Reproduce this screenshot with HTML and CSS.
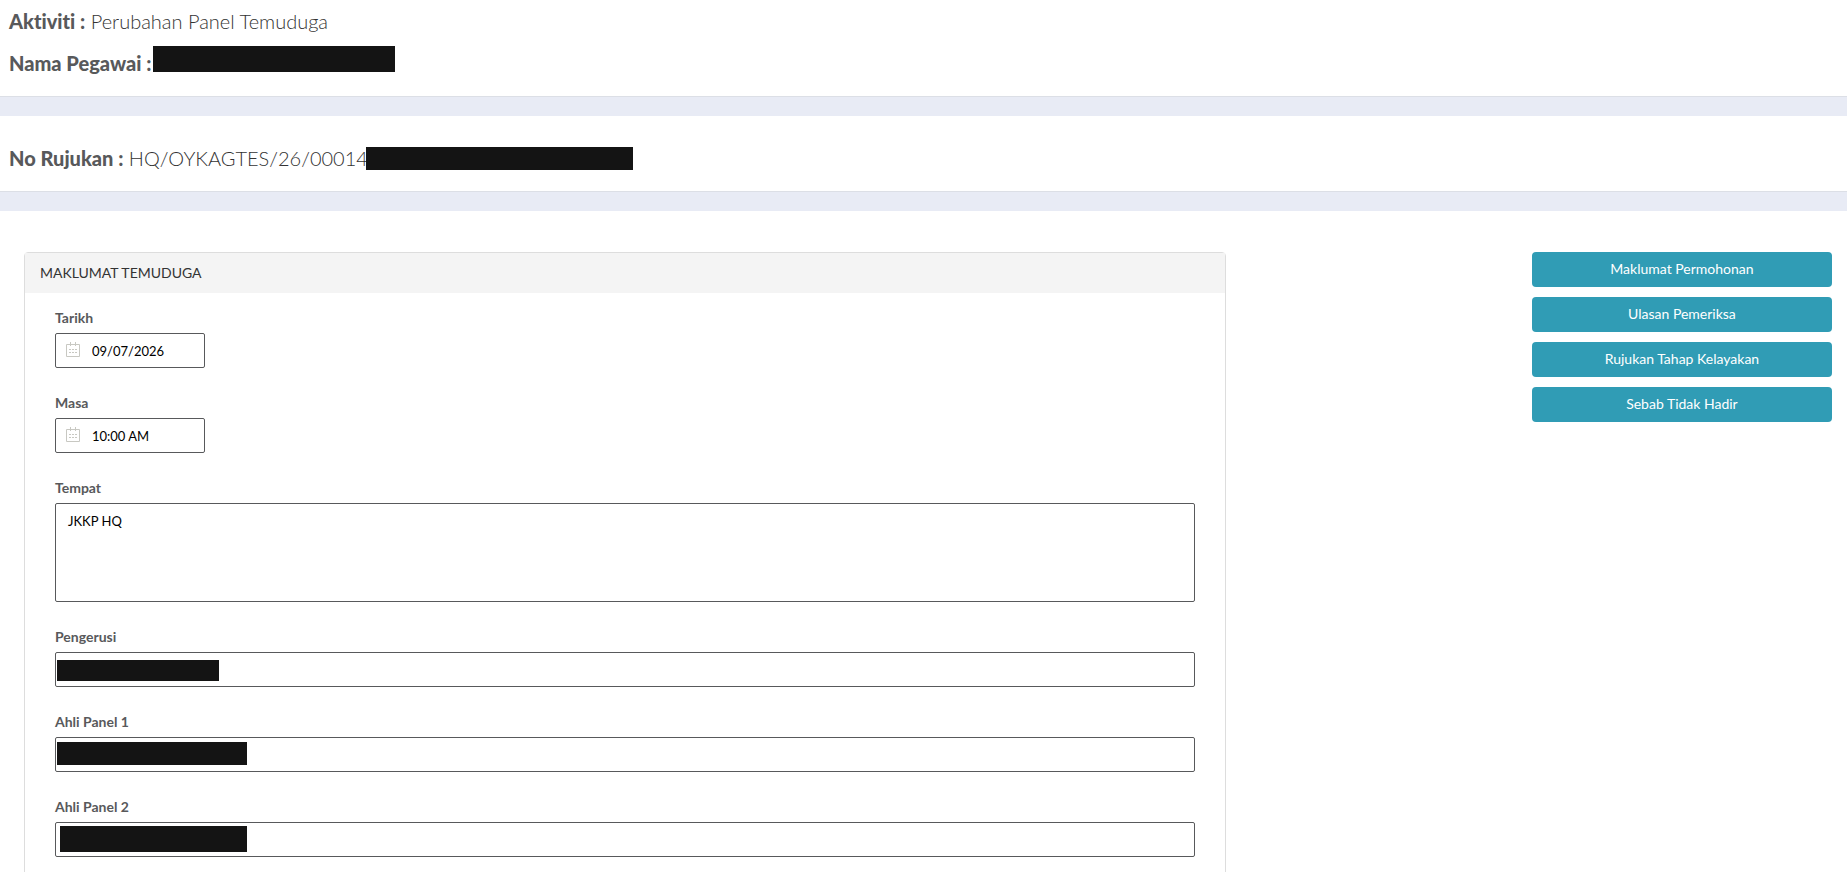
FILE: index.html
```html
<!DOCTYPE html>
<html lang="ms">
<head>
    <meta charset="UTF-8">
    <meta name="viewport" content="width=device-width, initial-scale=1.0">
    <title>Perubahan Panel Temuduga</title>
    <link rel="stylesheet" href="styles.css">
</head>
<body>
    <header class="activity">
        <p class="info-line"><strong>Aktiviti :</strong> Perubahan Panel Temuduga</p>
        <p class="info-line"><strong>Nama Pegawai :</strong><span class="redacted officer"></span></p>
    </header>

    <section class="reference">
        <p class="info-line"><strong>No Rujukan :</strong> HQ/OYKAGTES/26/00014<span class="redacted applicant"></span></p>
    </section>

    <main class="content">
        <form class="panel">
            <h2 class="panel-heading">MAKLUMAT TEMUDUGA</h2>
            <div class="panel-body">
                <div class="field">
                    <label for="tarikh">Tarikh</label>
                    <div class="icon-input">
                        <svg class="calendar" viewBox="0 0 16 16" aria-hidden="true">
                            <path d="M1.5 2.5h13v12h-13z M5.5 0v4 M10.5 0v4" fill="none" stroke="#c8c8c2"/>
                            <path d="M4 7.5h2M7 7.5h2M10 7.5h2M4 10.5h2M7 10.5h2M10 10.5h2" stroke="#c8c8c2"/>
                        </svg>
                        <input type="text" id="tarikh" value="09/07/2026">
                    </div>
                </div>

                <div class="field">
                    <label for="masa">Masa</label>
                    <div class="icon-input">
                        <svg class="calendar" viewBox="0 0 16 16" aria-hidden="true">
                            <path d="M1.5 2.5h13v12h-13z M5.5 0v4 M10.5 0v4" fill="none" stroke="#c8c8c2"/>
                            <path d="M4 7.5h2M7 7.5h2M10 7.5h2M4 10.5h2M7 10.5h2M10 10.5h2" stroke="#c8c8c2"/>
                        </svg>
                        <input type="text" id="masa" value="10:00 AM">
                    </div>
                </div>

                <div class="field">
                    <label for="tempat">Tempat</label>
                    <textarea id="tempat">JKKP HQ</textarea>
                </div>

                <div class="field">
                    <label for="pengerusi">Pengerusi</label>
                    <div class="masked-input">
                        <input type="text" id="pengerusi">
                        <span class="mask chair"></span>
                    </div>
                </div>

                <div class="field">
                    <label for="ahli1">Ahli Panel 1</label>
                    <div class="masked-input">
                        <input type="text" id="ahli1">
                        <span class="mask member1"></span>
                    </div>
                </div>

                <div class="field">
                    <label for="ahli2">Ahli Panel 2</label>
                    <div class="masked-input">
                        <input type="text" id="ahli2">
                        <span class="mask member2"></span>
                    </div>
                </div>
            </div>
        </form>

        <aside class="actions">
            <button type="button">Maklumat Permohonan</button>
            <button type="button">Ulasan Pemeriksa</button>
            <button type="button">Rujukan Tahap Kelayakan</button>
            <button type="button">Sebab Tidak Hadir</button>
        </aside>
    </main>
</body>
</html>
```
FILE: styles.css
```css
* {
    box-sizing: border-box;
}

body {
    margin: 0;
    font-family: Lato, "Open Sans", sans-serif;
    font-size: 14px;
    line-height: 20px;
    font-variant-ligatures: none;
    color: #58595b;
    background-color: #fff;
}

/* top lines */
.activity, .reference {
    padding: 0 9px 13px;
    border-bottom: 19px solid #e8ebf5;
    box-shadow: inset 0 -1px 0 #dcdfe6;
}

.reference {
    padding-top: 21px;
}

.info-line {
    display: flex;
    align-items: center;
    height: 42px;
    margin: 0;
    font-size: 20px;
    font-weight: 300;
    line-height: 42px;
    white-space: pre;
    color: #333;
}

.info-line strong {
    font-weight: 900;
    color: #58595b;
}

.redacted {
    background-color: #141414;
}

.officer {
    width: 242px;
    height: 26px;
    margin-bottom: 8px;
    margin-left: 2px;
}

.applicant {
    width: 267px;
    height: 23px;
    margin-left: -2px;
}

/* form */
.content {
    display: flex;
    justify-content: space-between;
    align-items: flex-start;
    padding: 41px 15px 20px 24px;
}

.panel {
    width: 66.5%;
    border: 1px solid #ddd;
    border-radius: 4px;
}

.panel-heading {
    margin: 0;
    padding: 10px 15px;
    font-size: 14px;
    font-weight: 400;
    color: #333;
    background-color: #f4f4f4;
}

.panel-body {
    padding: 15px 30px 5px;
}

.field {
    margin-bottom: 25px;
}

.field label {
    display: block;
    margin-bottom: 5px;
    font-weight: 700;
}

input, textarea {
    display: block;
    width: 100%;
    height: 35px;
    padding: 7px 12px;
    border: 1px solid #58595b;
    border-radius: 2px;
    font-family: inherit;
    font-size: 13px;
    line-height: 20px;
    color: #000;
    background-color: #fff;
}

textarea {
    height: 99px;
    resize: none;
}

.icon-input {
    position: relative;
    width: 150px;
}

.icon-input input {
    padding-left: 36px;
}

.calendar {
    position: absolute;
    top: 9px;
    left: 10px;
    width: 16px;
    height: 16px;
}

.masked-input {
    position: relative;
}

.mask {
    position: absolute;
    top: 8px;
    left: 2px;
    height: 21px;
    background-color: #141414;
}

.chair {
    width: 162px;
}

.member1 {
    top: 5px;
    width: 190px;
    height: 23px;
}

.member2 {
    top: 4px;
    left: 5px;
    width: 187px;
    height: 26px;
}

/* buttons on the right */
.actions {
    display: flex;
    flex-direction: column;
    gap: 10px;
    width: 16.6%;
}

.actions button {
    height: 35px;
    padding: 0 12px 2px;
    border: none;
    border-radius: 4px;
    font-family: inherit;
    font-size: 14px;
    line-height: 20px;
    color: #fff;
    background-color: #309cb5;
    cursor: pointer;
}

.actions button:hover {
    background-color: #2a8aa0;
}
```
